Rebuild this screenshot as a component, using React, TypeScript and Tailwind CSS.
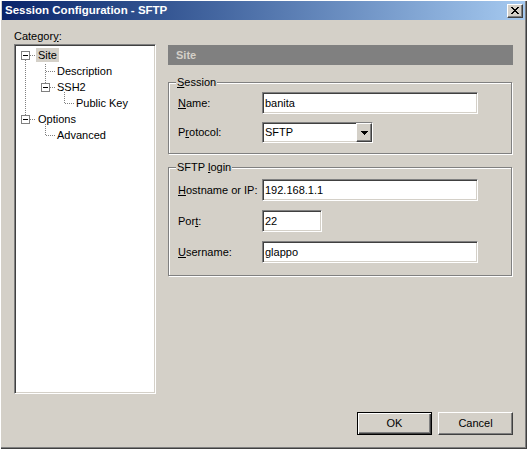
import * as React from "react";

// --- Bevel helpers (Win2k style) ---
const sunken =
  "border border-t-[#808080] border-l-[#808080] border-r-white border-b-white shadow-[inset_1px_1px_0_#404040,inset_-1px_-1px_0_#d4d0c8]";
const raised =
  "border border-t-white border-l-white border-r-[#404040] border-b-[#404040] shadow-[inset_-1px_-1px_0_#808080]";
const etched =
  "border border-[#808080] shadow-[1px_1px_0_#ffffff,inset_1px_1px_0_#ffffff]";

function U({ children }: { children: React.ReactNode }) {
  return <span className="underline underline-offset-[1px]">{children}</span>;
}

function Field({
  label,
  value,
  width = "w-[216px]",
}: {
  label: React.ReactNode;
  value: string;
  width?: string;
}) {
  return (
    <div className="flex h-[22px] items-center">
      <div className="w-[84px] pl-[9px] box-content">{label}</div>
      <div className={`${sunken} ${width} h-[22px] bg-white flex items-center pl-[2px]`}>
        {value}
      </div>
    </div>
  );
}

function GroupBox({
  title,
  className,
  children,
}: {
  title: React.ReactNode;
  className: string;
  children: React.ReactNode;
}) {
  return (
    <div className={`relative w-[344px] ${etched} ${className}`}>
      <div className="absolute left-[7px] top-[-8px] bg-[#d4d0c8] px-[1px] leading-[14px]">
        {title}
      </div>
      {children}
    </div>
  );
}

// --- Tree ---
const treeRows = [
  { text: "Site", indent: "pl-[20px]", selected: true },
  { text: "Description", indent: "pl-[39px]" },
  { text: "SSH2", indent: "pl-[39px]" },
  { text: "Public Key", indent: "pl-[58px]" },
  { text: "Options", indent: "pl-[20px]" },
  { text: "Advanced", indent: "pl-[39px]" },
];

function TreeLines() {
  const dot = { stroke: "#808080", strokeWidth: 1, strokeDasharray: "1 1" };
  const box = (x: number, y: number) => (
    <g>
      <rect x={x + 0.5} y={y + 0.5} width={8} height={8} fill="#ffffff" stroke="#808080" />
      <rect x={x + 2} y={y + 4} width={5} height={1} fill="#000000" />
    </g>
  );
  return (
    <svg
      className="absolute left-0 top-0 pointer-events-none"
      width="120"
      height="100"
      shapeRendering="crispEdges"
    >
      {/* root level */}
      <line x1={9.5} y1={14} x2={9.5} y2={69} {...dot} />
      <line x1={14} y1={9.5} x2={20} y2={9.5} {...dot} />
      <line x1={14} y1={73.5} x2={20} y2={73.5} {...dot} />
      {/* site children */}
      <line x1={29.5} y1={18} x2={29.5} y2={37} {...dot} />
      <line x1={30} y1={25.5} x2={40} y2={25.5} {...dot} />
      <line x1={34} y1={41.5} x2={40} y2={41.5} {...dot} />
      {/* ssh2 child */}
      <line x1={48.5} y1={46} x2={48.5} y2={57} {...dot} />
      <line x1={49} y1={57.5} x2={59} y2={57.5} {...dot} />
      {/* options child */}
      <line x1={29.5} y1={78} x2={29.5} y2={89} {...dot} />
      <line x1={30} y1={89.5} x2={40} y2={89.5} {...dot} />
      {box(5, 5)}
      {box(25, 37)}
      {box(5, 69)}
    </svg>
  );
}

export default function App() {
  return (
    <div className="w-[527px] h-[449px] bg-[#d4d0c8] text-black text-[11px] font-['Liberation_Sans',Arial,sans-serif] pt-[1px] px-[2px] flex flex-col shadow-[inset_1px_1px_0_#ffffff,inset_-1px_-1px_0_#404040,inset_-2px_-2px_0_#808080] overflow-hidden">
      {/* Title bar */}
      <div className="h-[19px] flex items-center justify-between bg-linear-to-r from-[#0a246a] to-[#a6caf0] pl-[3px] pr-[2px]">
        <span className="text-white font-bold text-[11.5px] leading-[19px]">
          Session Configuration - SFTP
        </span>
        <button
          type="button"
          className={`${raised} bg-[#d4d0c8] w-[16px] h-[14px] flex items-center justify-center`}
        >
          <svg width="8" height="7" viewBox="0 0 8 7" shapeRendering="crispEdges">
            <path d="M0 0h2v1h-2zM6 0h2v1h-2zM1 1h2v1h-2zM5 1h2v1h-2zM2 2h4v1h-4zM3 3h2v1h-2zM2 4h4v1h-4zM1 5h2v1h-2zM5 5h2v1h-2zM0 6h2v1h-2zM6 6h2v1h-2z" fill="#000" />
          </svg>
        </button>
      </div>

      {/* Body */}
      <div className="flex pl-[12px]">
        {/* Category */}
        <div className="w-[142px] pt-[9px]">
          <div className="h-[14px] leading-[14px]">
            Categor<U>y</U>:
          </div>
          <div className={`${sunken} mt-[1px] h-[350px] bg-white p-[1px]`}>
            <div className="relative pt-[1px]">
              <TreeLines />
              {treeRows.map((row) => (
                <div key={row.text} className={`h-[16px] flex items-center ${row.indent}`}>
                  <span
                    className={`h-[14px] leading-[14px] px-[2px] ${row.selected ? "bg-[#d4d0c8]" : ""}`}
                  >
                    {row.text}
                  </span>
                </div>
              ))}
            </div>
          </div>
        </div>

        {/* Page */}
        <div className="ml-[12px] w-[345px] pt-[25px] flex flex-col">
          <div className="h-[20px] bg-[#808080] text-[#d4d0c8] font-bold pl-[8px] leading-[20px]">
            Site
          </div>

          <GroupBox
            title={
              <>
                <U>S</U>ession
              </>
            }
            className="mt-[17px] h-[72px] pt-[9px] flex flex-col gap-[8px]"
          >
            <Field
              label={
                <>
                  <U>N</U>ame:
                </>
              }
              value="banita"
            />
            <div className="flex h-[21px] items-center">
              <div className="w-[84px] pl-[9px] box-content">
                P<U>r</U>otocol:
              </div>
              <div className={`${sunken} w-[111px] h-[21px] bg-white flex items-stretch`}>
                <div className="flex-1 flex items-center pl-[2px]">SFTP</div>
                <div
                  className={`${raised} w-[16px] bg-[#d4d0c8] flex items-center justify-center`}
                >
                  <svg width="7" height="4" viewBox="0 0 7 4" shapeRendering="crispEdges">
                    <path d="M0 0h7v1h-7zM1 1h5v1h-5zM2 2h3v1h-3zM3 3h1v1h-1z" fill="#000" />
                  </svg>
                </div>
              </div>
            </div>
          </GroupBox>

          <GroupBox
            title={
              <>
                SFTP <U>l</U>ogin
              </>
            }
            className="mt-[13px] h-[109px] pt-[11px] flex flex-col gap-[9px]"
          >
            <Field
              label={
                <>
                  <U>H</U>ostname or IP:
                </>
              }
              value="192.168.1.1"
            />
            <Field
              label={
                <>
                  Por<U>t</U>:
                </>
              }
              value="22"
              width="w-[60px]"
            />
            <Field
              label={
                <>
                  <U>U</U>sername:
                </>
              }
              value="glappo"
            />
          </GroupBox>

          <div className="mt-[136px] flex justify-end gap-[6px]">
            <button
              type="button"
              className="w-[75px] h-[23px] bg-[#d4d0c8] border border-black shadow-[inset_1px_1px_0_#ffffff,inset_-1px_-1px_0_#404040,inset_-2px_-2px_0_#808080] leading-[21px]"
            >
              OK
            </button>
            <button
              type="button"
              className={`${raised} w-[75px] h-[23px] bg-[#d4d0c8] leading-[21px]`}
            >
              Cancel
            </button>
          </div>
        </div>
      </div>
    </div>
  );
}
